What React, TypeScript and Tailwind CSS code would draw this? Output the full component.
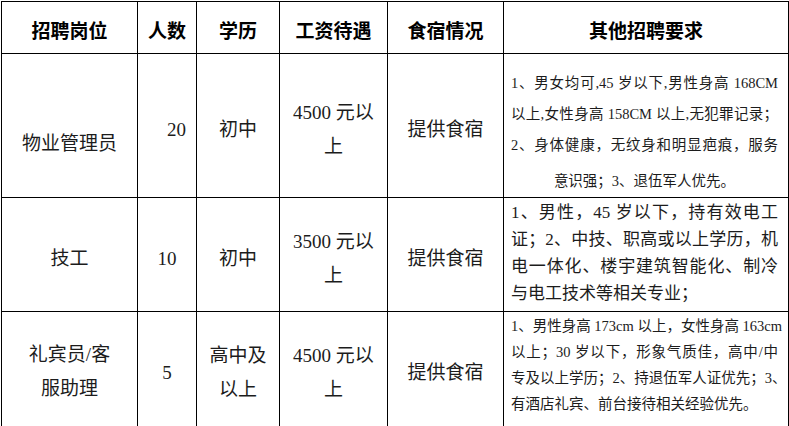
const font = "font-['Liberation_Serif','Noto_Sans_CJK_SC',serif]";

const Lines = ({ lines, size, lead, last = 'left', lastCls = '' }: { lines: string[]; size: string; lead: string; last?: 'left' | 'center'; lastCls?: string }) => (
  <div lang="zh-CN" className={`${size} ${lead}`}>
    {lines.map((l, i) => {
      const isLast = i === lines.length - 1;
      const align = isLast ? `${last === 'center' ? 'text-center' : 'text-left'} ${lastCls}` : 'text-justify [text-align-last:justify]';
      return (
        <div key={i} className={`${align} whitespace-nowrap`}>
          {l}
        </div>
      );
    })}
  </div>
);

const App = () => {
  const rows = [
    {
      job: '物业管理员',
      jobCls: 'pt-[36px]',
      count: '20',
      countCls: 'text-right pr-[10px] pt-[8px]',
      edu: ['初中'],
      pay: ['4500 元以', '上'],
      reqCls: 'pt-[14px]',
      req: (
        <Lines
          size="text-[14.5px]"
          lead="leading-[31px]"
          last="center"
          lastCls="mt-[5px]"
          lines={['1、男女均可,45 岁以下,男性身高 168CM', '以上,女性身高 158CM 以上,无犯罪记录；', '2、身体健康，无纹身和明显疤痕，服务', '意识强；3、退伍军人优先。']}
        />
      ),
      h: 'h-[143px]',
    },
    {
      job: '技工',
      jobCls: 'pt-[8px]',
      count: '10',
      countCls: 'text-center pt-[8px]',
      edu: ['初中'],
      pay: ['3500 元以', '上'],
      reqCls: 'pb-[4px]',
      req: (
        <Lines
          size="text-[17px]"
          lead="leading-[27px]"
          lines={['1、男性，45 岁以下，持有效电工', '证；2、中技、职高或以上学历，机', '电一体化、楼宇建筑智能化、制冷', '与电工技术等相关专业；']}
        />
      ),
      h: 'h-[114px]',
    },
    {
      job: ['礼宾员/客', '服助理'],
      jobCls: 'pt-[6px]',
      count: '5',
      countCls: 'text-center pt-[8px]',
      edu: ['高中及', '以上'],
      pay: ['4500 元以', '上'],
      reqCls: 'pb-[8px]',
      req: (
        <Lines
          size="text-[14.5px]"
          lead="leading-[26px]"
          lines={['1、男性身高 173cm 以上，女性身高 163cm', '以上；30 岁以下，形象气质佳，高中/中', '专及以上学历；2、持退伍军人证优先；3、', '有酒店礼宾、前台接待相关经验优先。']}
        />
      ),
      h: 'h-[115px]',
    },
  ];

  const cell = 'border border-black align-middle';

  return (
    <div className={`w-[789px] h-[426px] bg-white pl-px pt-px text-[#1c1c1c] ${font}`}>
      <table className="border-collapse table-fixed w-[787px]">
        <colgroup>
          <col className="w-[136px]" />
          <col className="w-[59px]" />
          <col className="w-[83px]" />
          <col className="w-[108px]" />
          <col className="w-[116px]" />
          <col className="w-[285px]" />
        </colgroup>
        <thead>
          <tr className="h-[52px] text-[19px] text-black font-bold">
            {['招聘岗位', '人数', '学历', '工资待遇', '食宿情况', '其他招聘要求'].map((t) => (
              <th key={t} className={`${cell} text-center pt-[9px] font-bold`}>
                {t}
              </th>
            ))}
          </tr>
        </thead>
        <tbody className="text-[19px] leading-[34px]">
          {rows.map((r, i) => (
            <tr key={i} className={r.h}>
              <td className={`${cell} text-center ${r.jobCls}`}>
                {(Array.isArray(r.job) ? r.job : [r.job]).map((l) => (
                  <div key={l}>{l}</div>
                ))}
              </td>
              <td className={`${cell} ${r.countCls}`}>{r.count}</td>
              <td className={`${cell} text-center pt-[8px]`}>
                {r.edu.map((l) => (
                  <div key={l}>{l}</div>
                ))}
              </td>
              <td className={`${cell} text-center pt-[8px]`}>
                {r.pay.map((l) => (
                  <div key={l}>{l}</div>
                ))}
              </td>
              <td className={`${cell} text-center pt-[8px]`}>提供食宿</td>
              <td className={`${cell} pl-[7px] pr-[10px] ${r.reqCls}`}>{r.req}</td>
            </tr>
          ))}
        </tbody>
      </table>
    </div>
  );
};

export default App;
